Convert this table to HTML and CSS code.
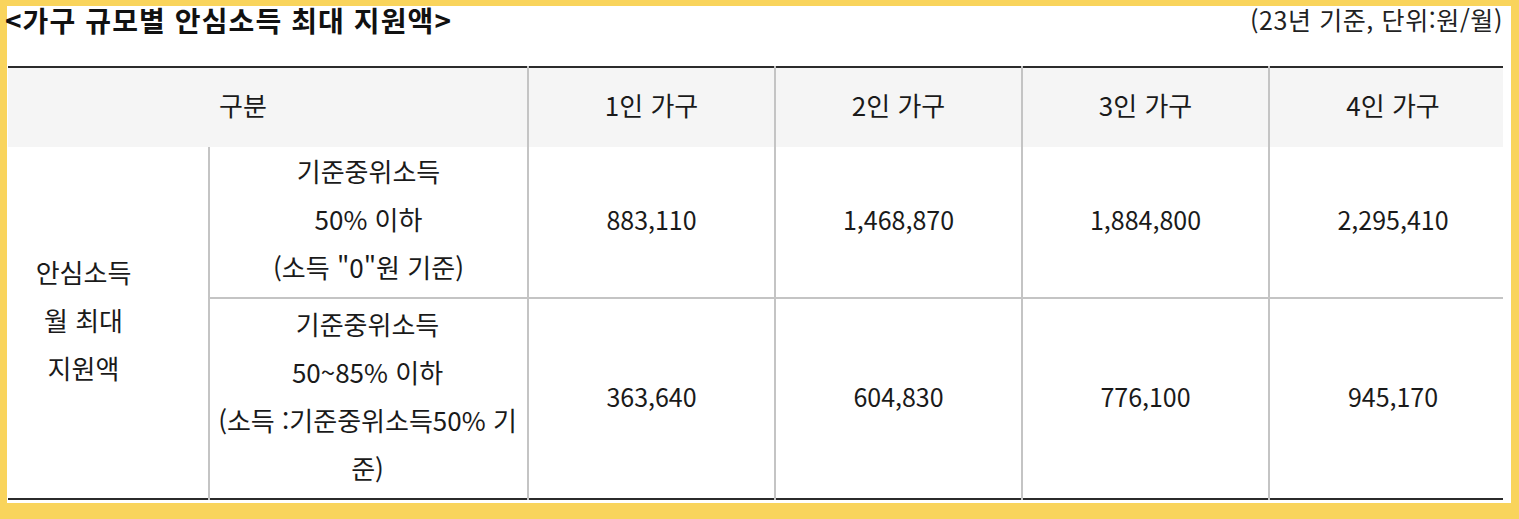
FILE: index.html
```html
<!DOCTYPE html>
<html lang="ko">
<head>
<meta charset="utf-8">
<title>가구 규모별 안심소득 최대 지원액</title>
<link rel="stylesheet" href="styles.css">
</head>
<body>
<div class="frame">
  <div class="head">
    <h2 class="title">&lt;가구 규모별 안심소득 최대 지원액&gt;</h2>
    <span class="unit">(23년 기준, 단위:원/월)</span>
  </div>
  <div class="table-wrap">
    <table class="grid">
      <colgroup>
        <col class="c-a"><col class="c-b"><col class="c-n"><col class="c-n"><col class="c-n"><col class="c-n">
      </colgroup>
      <thead>
        <tr>
          <th colspan="2">구분</th>
          <th>1인 가구</th>
          <th>2인 가구</th>
          <th>3인 가구</th>
          <th>4인 가구</th>
        </tr>
      </thead>
      <tbody>
        <tr class="r1">
          <td rowspan="2">안심소득<br>월 최대<br>지원액</td>
          <td>기준중위소득<br>50% 이하<br>(소득 "0"원 기준)</td>
          <td class="num">883,110</td>
          <td class="num">1,468,870</td>
          <td class="num">1,884,800</td>
          <td class="num">2,295,410</td>
        </tr>
        <tr class="r2">
          <td class="sub">기준중위소득<br>50~85% 이하<br>(소득 :기준중위소득50% 기준)</td>
          <td class="num">363,640</td>
          <td class="num">604,830</td>
          <td class="num">776,100</td>
          <td class="num">945,170</td>
        </tr>
      </tbody>
    </table>
  </div>
</div>
</body>
</html>
```

FILE: styles.css
```css
html, body {
  margin: 0;
  padding: 0;
}
body {
  background: #f9d45c;
  font-family: "Noto Sans CJK KR", "Noto Sans", sans-serif;
  color: #1a1a1a;
  height: 519px;
  overflow: hidden;
}
.frame {
  background: #ffffff;
  margin: 6px 8px 0 7px;
  height: 497px;
  padding: 0 8px 0 1px;
  box-sizing: border-box;
}
.head {
  display: flex;
  justify-content: space-between;
  align-items: flex-start;
  height: 60px;
}
.title {
  margin: -3px 0 0 -3px;
  font-size: 28px;
  font-weight: 700;
  line-height: 34px;
  color: #111;
  letter-spacing: 1.1px;
}
.unit {
  font-size: 25px;
  line-height: 28px;
  margin-top: -1px;
  color: #222;
  letter-spacing: 0.6px;
}
.table-wrap {
  overflow: hidden;
  width: 100%;
}
.grid {
  border-collapse: collapse;
  table-layout: fixed;
  width: 1557px;
  margin-left: -49px;
  border-top: 2px solid #2b2b2b;
  border-bottom: 2px solid #2b2b2b;
  font-size: 26px;
  line-height: 48px;
}
.c-a { width: 250px; }
.c-b { width: 319px; }
.c-n { width: 247px; }
.grid th {
  background: #f5f5f5;
  font-weight: 400;
  height: 73px;
  padding: 0 0 6px;
  text-align: center;
  vertical-align: middle;
  border-left: 2px solid #c4c4c4;
}
.grid th:first-child {
  border-left: none;
}
.grid td {
  text-align: center;
  vertical-align: middle;
  padding: 0 4px 6px;
  border-left: 2px solid #c4c4c4;
}
.grid td.num {
  font-size: 25px;
}
.grid tr.r1 td:first-child {
  border-left: none;
}
.grid tr.r1 td {
  height: 144px;
}
.grid tr.r2 td {
  height: 193px;
  border-top: 2px solid #c4c4c4;
}
.grid td.sub {
  padding: 0 8px 6px 6px;
}
```
